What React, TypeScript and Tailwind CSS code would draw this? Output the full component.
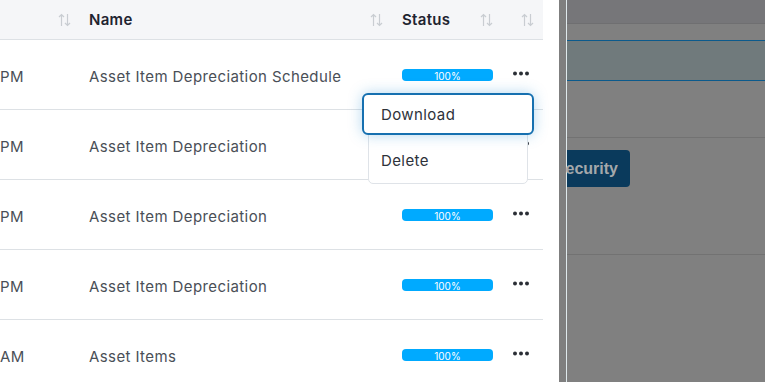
import React from "react";

type Row = { time: string; name: string };

const rows: Row[] = [
  { time: "PM", name: "Asset Item Depreciation Schedule" },
  { time: "PM", name: "Asset Item Depreciation" },
  { time: "PM", name: "Asset Item Depreciation" },
  { time: "PM", name: "Asset Item Depreciation" },
  { time: "AM", name: "Asset Items" },
];

function SortIcon() {
  return (
    <svg width="13" height="14" viewBox="0 0 13 14" fill="none" stroke="#c9cdd2" strokeWidth="1.2">
      <path d="M3.5 13V1.5M1 4l2.5-2.5L6 4" />
      <path d="M9.5 1v11.5M7 10l2.5 2.5L12 10" />
    </svg>
  );
}

function Dots() {
  return (
    <svg width="16" height="5" viewBox="0 0 16 5" fill="#2b2f36">
      <circle cx="2" cy="2.5" r="2" />
      <circle cx="8" cy="2.5" r="2" />
      <circle cx="14" cy="2.5" r="2" />
    </svg>
  );
}

export default function App() {
  return (
    <div
      className="flex w-[765px] h-[382px] overflow-hidden bg-white"
      style={{ fontFamily: "Inter, 'Open Sans', sans-serif" }}
    >
      <div className="relative w-[559px] shrink-0 bg-white">
        <div className="w-[543px]">
          {/* header */}
          <div className="flex h-[40px] bg-[#f5f6f8] border-b border-[#dde1e5] items-center text-[15px] font-semibold text-[#1f2430] tracking-[0.3px]">
            <div className="w-[89px] flex justify-end pr-[18px]">
              <SortIcon />
            </div>
            <div className="w-[313px] flex items-center justify-between pr-[19px]">
              <span className="pt-[2px]">Name</span>
              <SortIcon />
            </div>
            <div className="w-[111px] flex items-center justify-between pr-[20px]">
              <span className="pt-[2px]">Status</span>
              <SortIcon />
            </div>
            <div className="w-[30px] flex justify-end pr-[9px]">
              <SortIcon />
            </div>
          </div>
          {rows.map((row, i) => (
            <div
              key={i}
              className="flex h-[70px] items-center border-b border-[#dde1e5] text-[15px] text-[#4a4f57] tracking-[0.4px]"
            >
              <div className="w-[89px] pt-[6px]">{row.time}</div>
              <div className="w-[313px] pt-[6px]">{row.name}</div>
              <div className="w-[111px]">
                <div className="h-[12px] w-[91px] rounded-[4px] bg-[#00aaff] overflow-hidden flex justify-center">
                  <span className="text-[10px] leading-[10px] tracking-normal text-white mt-[2px]">100%</span>
                </div>
              </div>
              <div className="w-[30px] pb-[2px]">
                <Dots />
              </div>
            </div>
          ))}
        </div>

        {/* dropdown menu */}
        <div className="absolute left-[368px] top-[93px] w-[160px] h-[91px] rounded-[5px] border border-[#dfe3e8] bg-white text-[15px] text-[#2e323a] tracking-[0.4px]">
          <div className="-mx-[7px] -mt-px h-[42px] flex items-center pl-[17px] pt-[2px] rounded-[6px] border-2 border-[#1670b0] bg-white shadow-[0_0_14px_rgba(40,140,210,0.35)]">
            Download
          </div>
          <div className="h-[48px] flex items-center pl-[12px] pt-[4px]">Delete</div>
        </div>
      </div>

      <div className="w-[7px] shrink-0 bg-[#7f7f7f]" />
      <div className="w-px shrink-0 bg-[#dfe9ec]" />

      <div className="flex-1 flex flex-col bg-[#808080]">
        <div className="h-[24px] bg-[#767679] border-b border-[#6f6f71]" />
        <div className="h-[16px]" />
        <div className="h-[41px] bg-[#707a7c] border-y border-[#0b5a8c]" />
        <div className="h-[57px] border-b border-[#727272]" />
        <div className="pt-[12px]">
          <div
            className="w-[63px] h-[37px] rounded-r-[4px] bg-[#0a3a5c] flex items-center justify-end pr-[12px] text-[16px] font-bold text-[#a4a8ab]"
            style={{ fontFamily: "'Liberation Sans', Arial, sans-serif" }}
          >
            <span className="whitespace-nowrap">ecurity</span>
          </div>
        </div>
        <div className="h-[68px] border-b border-[#727272]" />
      </div>
    </div>
  );
}
